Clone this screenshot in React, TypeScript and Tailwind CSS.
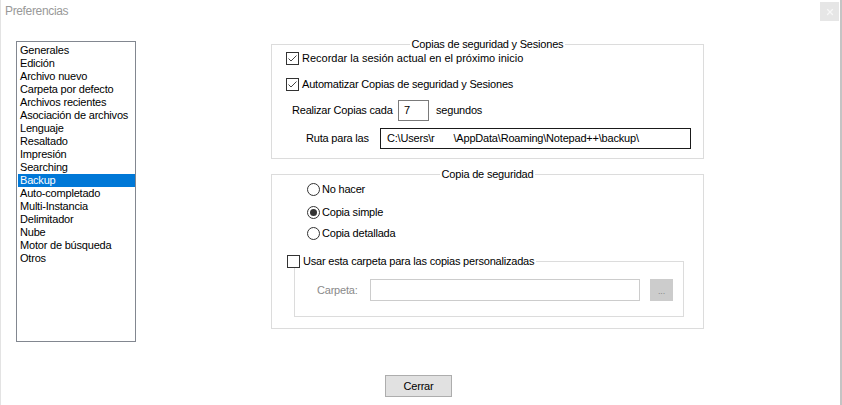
import { X } from 'lucide-react';

const items = [
  'Generales',
  'Edición',
  'Archivo nuevo',
  'Carpeta por defecto',
  'Archivos recientes',
  'Asociación de archivos',
  'Lenguaje',
  'Resaltado',
  'Impresión',
  'Searching',
  'Backup',
  'Auto-completado',
  'Multi-Instancia',
  'Delimitador',
  'Nube',
  'Motor de búsqueda',
  'Otros',
];

function Check({ checked }: { checked?: boolean }) {
  return (
    <span className="flex h-[13px] w-[13px] shrink-0 items-center justify-center border border-[#333] bg-white">
      {checked && (
        <svg width="11" height="11" viewBox="0 0 11 11">
          <path d="M1.5 5.5 L4 8 L9.5 2.5" fill="none" stroke="#444" strokeWidth="1" />
        </svg>
      )}
    </span>
  );
}

function Radio({ checked, label, className }: { checked?: boolean; label: string; className?: string }) {
  return (
    <div className={`flex h-[14px] items-center pl-[35px] ${className ?? ''}`}>
      <span className="flex h-[13px] w-[13px] shrink-0 items-center justify-center rounded-full border border-[#333] bg-white">
        {checked && <span className="h-[7px] w-[7px] rounded-full bg-[#333]" />}
      </span>
      <span className="ml-[2px]">{label}</span>
    </div>
  );
}

export default function App() {
  return (
    <div className="flex h-[405px] w-[842px] flex-col overflow-hidden border-l border-r-2 border-l-[#e3e3e3] border-r-[#c4c4c4] bg-white font-['Liberation_Sans',Arial,sans-serif] text-[11px] tracking-[-0.2px] text-black">
      {/* title bar */}
      <div className="flex h-[22px] shrink-0 items-start justify-between">
        <span className="pl-[4px] pt-[4px] text-[12px] leading-[14px] tracking-[-0.35px] text-[#999]">Preferencias</span>
        <div className="mr-[1px] mt-[2px] flex h-[19px] w-[19px] items-center justify-center bg-[#e6e6e6]">
          <X size={10} strokeWidth={3} className="text-[#f7f7f7]" />
        </div>
      </div>

      <div className="flex items-start">
        {/* category list */}
        <div className="ml-[15px] mt-[19px] h-[301px] w-[120px] shrink-0 border border-[#828790] pl-[1px] pt-[2px]">
          {items.map((it) => (
            <div
              key={it}
              className={`h-[13px] whitespace-nowrap pl-[2px] leading-[13px] ${it === 'Backup' ? 'bg-[#0078d7] text-white' : ''}`}
            >
              {it}
            </div>
          ))}
        </div>

        {/* right panel */}
        <div className="ml-[135px] mt-[15px] flex w-[433px] flex-col">
          <fieldset className="border border-[#dcdcdc] pb-[9px]">
            <legend className="mx-auto px-[2px] leading-[14px]">Copias de seguridad y Sesiones</legend>
            <div className="flex h-[14px] items-center pl-[14px]">
              <Check checked />
              <span className="ml-[3px] tracking-normal">Recordar la sesión actual en el próximo inicio</span>
            </div>
            <div className="mt-[12px] flex h-[14px] items-center pl-[14px]">
              <Check checked />
              <span className="ml-[3px]">Automatizar Copias de seguridad y Sesiones</span>
            </div>
            <div className="mt-[9px] flex h-[21px] items-center pl-[20px]">
              <span className="w-[106px] shrink-0">Realizar Copias cada</span>
              <div className="flex h-[21px] w-[31px] items-center border border-[#7a7a7a] pl-[5px]">7</div>
              <span className="ml-[7px]">segundos</span>
            </div>
            <div className="mt-[7px] flex h-[21px] items-center pl-[34px]">
              <span className="w-[74px] shrink-0">Ruta para las</span>
              <div className="flex h-[21px] w-[311px] items-center whitespace-nowrap border border-[#1a1a1a] pl-[6px]">
                <span>C:\Users\r</span>
                <span className="ml-[19px]">\AppData\Roaming\Notepad++\backup\</span>
              </div>
            </div>
          </fieldset>

          <fieldset className="mt-[8px] border border-[#dcdcdc] pb-[11px]">
            <legend className="mx-auto px-[2px] leading-[14px]">Copia de seguridad</legend>
            <Radio label="No hacer" className="mt-[1px]" />
            <Radio label="Copia simple" checked className="mt-[9px]" />
            <Radio label="Copia detallada" className="mt-[7px]" />

            <fieldset className="ml-[22px] mr-[19px] mt-[14px] border border-[#dcdcdc] pb-[15px]">
              <legend className="-ml-[8px] flex h-[14px] items-center pr-[2px] leading-[14px]">
                <Check />
                <span className="ml-[3px] bg-white">Usar esta carpeta para las copias personalizadas</span>
              </legend>
              <div className="mt-[11px] flex h-[22px] items-center pl-[22px]">
                <span className="w-[53px] shrink-0 text-[#8a8a8a]">Carpeta:</span>
                <div className="h-[22px] w-[270px] border border-[#cccccc]" />
                <div className="ml-[10px] flex h-[22px] w-[23px] items-center justify-center bg-[#cccccc] pt-[4px] text-[9px] text-[#8a8a8a]">
                  ...
                </div>
              </div>
            </fieldset>
          </fieldset>
        </div>
      </div>

      <div className="mt-[33px] flex">
        <button className="ml-[384px] h-[22px] w-[67px] border border-[#adadad] bg-[#e1e1e1] text-[11px] leading-[20px]">
          Cerrar
        </button>
      </div>
    </div>
  );
}
